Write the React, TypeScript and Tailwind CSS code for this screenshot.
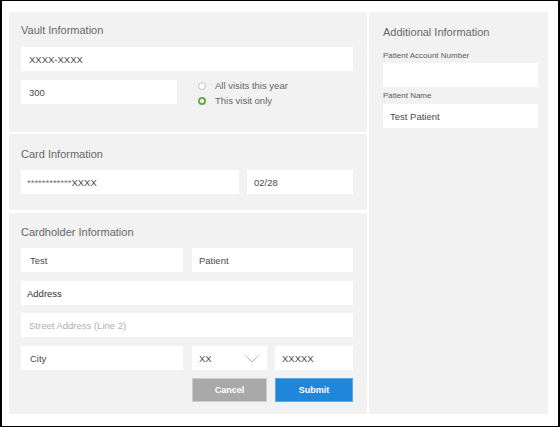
import React from "react";

const Field = ({
  w,
  children,
  pl = "pl-[8px]",
  color = "text-[#4a4a4a]",
  extra,
}: {
  w: string;
  children?: React.ReactNode;
  pl?: string;
  color?: string;
  extra?: React.ReactNode;
}) => (
  <div
    className={`${w} h-[24px] bg-white flex items-center ${pl} pt-[2px] text-[9.5px] leading-[12px] ${color} shrink-0`}
  >
    <span className="whitespace-nowrap">{children}</span>
    {extra}
  </div>
);

const Title = ({ children }: { children: React.ReactNode }) => (
  <div className="text-[11px] leading-[13px] text-[#686868]">{children}</div>
);

export default function App() {
  return (
    <div className="w-[560px] h-[427px] bg-white border-black border-l-2 border-r-2 border-t border-b pl-[7px] pt-[11px] pr-[10px] pb-[12px] flex gap-[2px] font-['Liberation_Sans',Arial,sans-serif] box-border">
      {/* Left column */}
      <div className="w-[358px] flex flex-col shrink-0">
        {/* Vault */}
        <div className="h-[120px] bg-[#f2f2f2] pl-[12px] pr-[14px] pt-[12px]">
          <Title>Vault Information</Title>
          <div className="mt-[10px]">
            <Field w="w-[332px]">XXXX-XXXX</Field>
          </div>
          <div className="mt-[9px] flex">
            <Field w="w-[156px]">300</Field>
            <div className="ml-[21px] -mt-[1px] flex flex-col text-[9.5px] leading-[14.5px] text-[#666]">
              <div className="flex items-center">
                <span className="w-[8px] h-[8px] rounded-full border border-[#c4c4c4] bg-white box-border" />
                <span className="ml-[9px]">All visits this year</span>
              </div>
              <div className="flex items-center">
                <span className="w-[8px] h-[8px] rounded-full border-[2.5px] border-[#66a84e] bg-white box-border" />
                <span className="ml-[9px]">This visit only</span>
              </div>
            </div>
          </div>
        </div>

        {/* Card */}
        <div className="mt-[2px] h-[76px] bg-[#f2f2f2] pl-[12px] pr-[14px] pt-[14px]">
          <Title>Card Information</Title>
          <div className="mt-[9px] flex gap-[8px]">
            <Field w="w-[218px]" pl="pl-[6px]">
              <span className="text-[#777]">************</span>XXXX
            </Field>
            <Field w="w-[106px]" pl="pl-[7px]">02/28</Field>
          </div>
        </div>

        {/* Cardholder */}
        <div className="mt-[3px] h-[201px] bg-[#f2f2f2] pl-[12px] pr-[14px] pt-[13px]">
          <Title>Cardholder Information</Title>
          <div className="mt-[9px] flex gap-[9px]">
            <Field w="w-[162px]" pl="pl-[9px]">Test</Field>
            <Field w="w-[161px]" pl="pl-[7px]">Patient</Field>
          </div>
          <div className="mt-[9px]">
            <Field w="w-[332px]" pl="pl-[6px]" color="text-[#333]">Address</Field>
          </div>
          <div className="mt-[8px]">
            <Field w="w-[332px]" pl="pl-[8px]" color="text-[#b0b0b0]">Street Address (Line 2)</Field>
          </div>
          <div className="mt-[9px] flex">
            <Field w="w-[162px]" pl="pl-[9px]">City</Field>
            <div className="ml-[9px]">
              <Field
                w="w-[75px]"
                pl="pl-[7px]"
                extra={
                  <svg
                    className="ml-auto mr-[8px] -mt-[1px]"
                    width="14"
                    height="8"
                    viewBox="0 0 14 8"
                    fill="none"
                  >
                    <polyline points="0.5,0.5 7,7 13.5,0.5" stroke="#b5b5b5" strokeWidth="1" />
                  </svg>
                }
              >
                XX
              </Field>
            </div>
            <div className="ml-[8px]">
              <Field w="w-[78px]" pl="pl-[7px]">XXXXX</Field>
            </div>
          </div>
          <div className="mt-[8px] flex ml-[171px] gap-[8px]">
            <button className="w-[75px] h-[24px] bg-[#a9a9a9] border border-[#cdcdcd] text-white font-bold text-[9px] leading-[22px] text-center">
              Cancel
            </button>
            <button className="w-[78px] h-[24px] bg-[#1f86da] border border-[#5aa6e6] text-white font-bold text-[9px] leading-[22px] text-center">
              Submit
            </button>
          </div>
        </div>
      </div>

      {/* Right column */}
      <div className="w-[179px] h-[402px] bg-[#f2f2f2] pl-[14px] pr-[10px] pt-[14px] shrink-0">
        <Title>Additional Information</Title>
        <div className="mt-[12px] text-[8px] leading-[10px] text-[#5a5a5a]">Patient Account Number</div>
        <div className="mt-[2px]">
          <Field w="w-[155px]" />
        </div>
        <div className="mt-[4px] text-[8px] leading-[10px] text-[#5a5a5a]">Patient Name</div>
        <div className="mt-[3px]">
          <Field w="w-[155px]" pl="pl-[7px]">Test Patient</Field>
        </div>
      </div>
    </div>
  );
}
